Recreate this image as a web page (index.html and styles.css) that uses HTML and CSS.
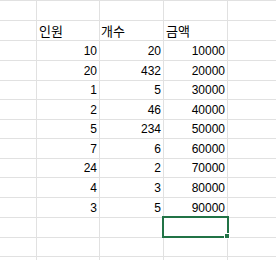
FILE: index.html
```html
<!DOCTYPE html>
<html lang="ko">
<head>
<meta charset="utf-8">
<title>Sheet</title>
<link rel="stylesheet" href="styles.css">
</head>
<body>
<div class="sheet">
  <div class="c"></div><div class="c"></div><div class="c"></div><div class="c"></div><div class="c"></div>
  <div class="c"></div><div class="c t t1">인원</div><div class="c t t2">개수</div><div class="c t t3">금액</div><div class="c"></div>
  <div class="c"></div><div class="c n">10</div><div class="c n">20</div><div class="c n">10000</div><div class="c"></div>
  <div class="c"></div><div class="c n">20</div><div class="c n">432</div><div class="c n">20000</div><div class="c"></div>
  <div class="c"></div><div class="c n">1</div><div class="c n">5</div><div class="c n">30000</div><div class="c"></div>
  <div class="c"></div><div class="c n">2</div><div class="c n">46</div><div class="c n">40000</div><div class="c"></div>
  <div class="c"></div><div class="c n">5</div><div class="c n">234</div><div class="c n">50000</div><div class="c"></div>
  <div class="c"></div><div class="c n">7</div><div class="c n">6</div><div class="c n">60000</div><div class="c"></div>
  <div class="c"></div><div class="c n">24</div><div class="c n">2</div><div class="c n">70000</div><div class="c"></div>
  <div class="c"></div><div class="c n">4</div><div class="c n">3</div><div class="c n">80000</div><div class="c"></div>
  <div class="c"></div><div class="c n">3</div><div class="c n">5</div><div class="c n">90000</div><div class="c"></div>
  <div class="c"></div><div class="c"></div><div class="c"></div><div class="c sel"></div><div class="c"></div>
  <div class="c"></div><div class="c"></div><div class="c"></div><div class="c"></div><div class="c"></div>
  <div class="c"></div><div class="c"></div><div class="c"></div><div class="c"></div><div class="c"></div>
</div>
</body>
</html>
```

FILE: styles.css
```css
html, body {
  margin: 0;
  padding: 0;
  background: #ffffff;
}
.sheet {
  width: 276px;
  height: 260px;
  overflow: hidden;
  box-sizing: border-box;
  padding-top: 1px;
  display: grid;
  grid-template-columns: 36px 62px 63px 63px 1fr;
  grid-template-rows: 19px 19px 19px 19px 18px 19px 18px 19px 18px 19px 19px 19px 18px 19px;
  gap: 1px;
  background: #e1e1e1;
  font-family: "Liberation Sans", "Noto Sans CJK KR", sans-serif;
  font-size: 12px;
  line-height: 14px;
  color: #000000;
}
.c {
  background: #ffffff;
  display: flex;
  align-items: flex-end;
  padding: 0 2px 2px 2px;
  box-sizing: border-box;
  white-space: nowrap;
  min-width: 0;
}
.n {
  justify-content: flex-end;
}
.t {
  justify-content: flex-start;
  font-family: "Noto Sans CJK KR", sans-serif;
  font-size: 13px;
  line-height: 15px;
  padding-bottom: 2px;
}
.t1 { padding-left: 2px; }
.t2 { padding-left: 1px; }
.t3 { padding-left: 2px; }
.sel {
  position: relative;
  overflow: visible;
}
.sel::after {
  content: "";
  position: absolute;
  left: -2px;
  right: -2px;
  top: -2px;
  bottom: -1px;
  border: 2px solid #217346;
  box-sizing: border-box;
}
.sel::before {
  content: "";
  position: absolute;
  right: -3px;
  bottom: -2px;
  width: 4px;
  height: 4px;
  background: #217346;
  border: 1px solid #ffffff;
  z-index: 1;
}
```
